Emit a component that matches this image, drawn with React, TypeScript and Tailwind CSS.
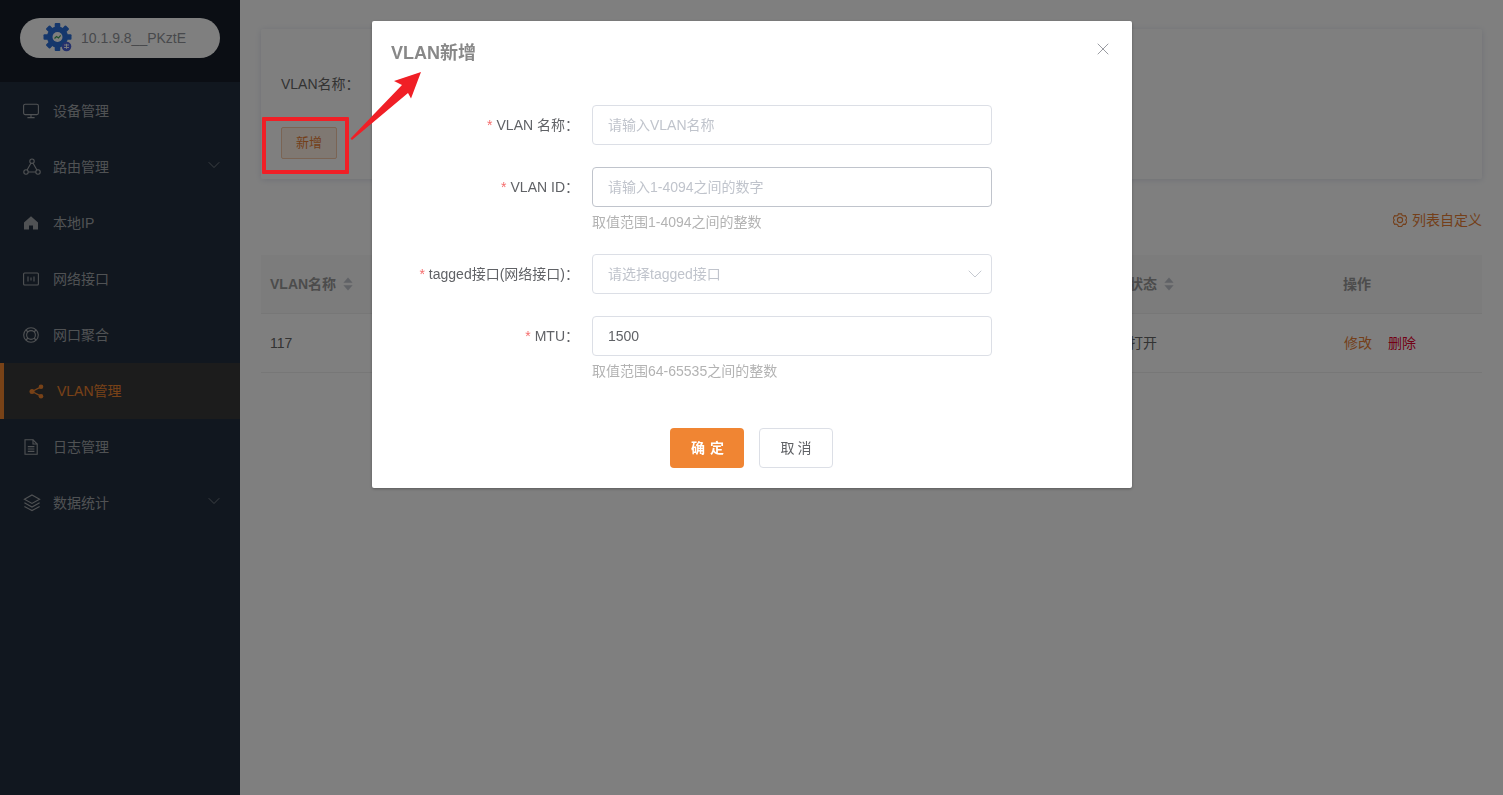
import { ChevronDown, X } from "lucide-react";

function Logo() {
  const teeth = [0, 45, 90, 135, 180, 225, 270, 315];
  return (
    <svg width="30" height="30" viewBox="0 0 30 30" className="shrink-0">
      <g transform="translate(14.5 14)" fill="#2a6fd8">
        <circle r="10.5" />
        {teeth.map((a) => (
          <rect key={a} x="-2.8" y="-14" width="5.6" height="6" rx="1" transform={`rotate(${a})`} />
        ))}
        <circle r="5" fill="#fff" />
        <path d="M-3 1.5 L-1 -0.5 L1 1 L3.2 -1.6" stroke="#3fa15a" strokeWidth="1.2" fill="none" />
      </g>
      <circle cx="23.5" cy="23.5" r="4.8" fill="#4a63d8" />
      <path d="M21 22h5M21 24.5h5M23.5 20.8v5" stroke="#fff" strokeWidth="0.9" />
    </svg>
  );
}

function DeviceIcon() {
  return (
    <svg width="16" height="16" viewBox="0 0 16 16" fill="none" stroke="currentColor" strokeWidth="1.1">
      <rect x="0.6" y="1.2" width="14.8" height="10.4" rx="1.6" />
      <path d="M8 11.6v2.8M4.4 14.6h7.2" />
    </svg>
  );
}

function RouteIcon() {
  return (
    <svg width="18" height="18" viewBox="0 0 18 18" fill="none" stroke="currentColor" strokeWidth="1.1">
      <circle cx="9" cy="3.2" r="2.2" />
      <circle cx="3" cy="14" r="2.2" />
      <circle cx="15" cy="14" r="2.2" />
      <path d="M7.9 5.2 4.1 12M10.1 5.2 13.9 12M5.2 14h7.6" />
    </svg>
  );
}

function HomeIcon() {
  return (
    <svg width="16" height="16" viewBox="0 0 16 16" fill="currentColor">
      <path d="M8 1.2 15 7.4V14.6H10V10.4H6V14.6H1V7.4Z" />
    </svg>
  );
}

function PortIcon() {
  return (
    <svg width="16" height="16" viewBox="0 0 16 16" fill="none" stroke="currentColor" strokeWidth="1.1">
      <rect x="0.6" y="2" width="14.8" height="12" rx="1" />
      <path d="M5 5.4v5.2M8 6.6v3M11 5.4v5.2" />
    </svg>
  );
}

function BondIcon() {
  return (
    <svg width="16" height="16" viewBox="0 0 16 16" fill="none" stroke="currentColor" strokeWidth="1.1">
      <circle cx="8" cy="8" r="7.3" />
      <circle cx="8" cy="8" r="4.4" />
      <path d="M3 3 5 5M13 3 11 5M3 13l2-2M13 13l-2-2" />
    </svg>
  );
}

function ShareIcon() {
  return (
    <svg width="15" height="15" viewBox="0 0 15 15" fill="currentColor">
      <circle cx="3" cy="7.5" r="2.5" />
      <circle cx="12" cy="2.8" r="2.3" />
      <circle cx="12" cy="12.2" r="2.3" />
      <path d="M3 7.5 12 2.8M3 7.5l9 4.7" stroke="currentColor" strokeWidth="1.4" />
    </svg>
  );
}

function LogIcon() {
  return (
    <svg width="16" height="16" viewBox="0 0 16 16" fill="none" stroke="currentColor" strokeWidth="1.1">
      <path d="M2 0.8H10L14.2 5V15.2H2Z" />
      <path d="M10 0.8V5H14.2M4.8 7.6h6.6M4.8 10h6.6M4.8 12.4h6.6" />
    </svg>
  );
}

function StackIcon() {
  return (
    <svg width="18" height="18" viewBox="0 0 18 18" fill="none" stroke="currentColor" strokeWidth="1.1">
      <path d="M9 1 16.6 5.2 9 9.4 1.4 5.2Z" />
      <path d="M1.4 8.8 9 13l7.6-4.2M1.4 12.4 9 16.6l7.6-4.2" />
    </svg>
  );
}

function SortArrows() {
  return (
    <svg width="10" height="14" viewBox="0 0 10 14" fill="#c0c4cc" className="ml-[7px]">
      <path d="M5 0.5 9.6 5.8H0.4Z" />
      <path d="M5 13.5 9.6 8.2H0.4Z" />
    </svg>
  );
}

function GearOutline() {
  return (
    <svg width="14" height="14" viewBox="0 0 14 14" fill="none" stroke="currentColor" strokeWidth="1.1">
      <path d="M5.4 0.9h3.2l.6 1.7 1.8.3 1.4-.2 1.4 2.6-1.1 1.7 1.1 1.7-1.4 2.6-1.9-.2-1.3 1.4-.6 1.1H5.4l-.6-1.7-1.8-.8-1.4.2L.2 8.7l1.1-1.7L.2 5.3l1.4-2.6 1.4.2 1.8-.3Z" />
      <circle cx="7" cy="7" r="2.6" />
    </svg>
  );
}

const menu = [
  { label: "设备管理", icon: <DeviceIcon /> },
  { label: "路由管理", icon: <RouteIcon />, arrow: true },
  { label: "本地IP", icon: <HomeIcon /> },
  { label: "网络接口", icon: <PortIcon /> },
  { label: "网口聚合", icon: <BondIcon /> },
  { label: "VLAN管理", icon: <ShareIcon />, active: true },
  { label: "日志管理", icon: <LogIcon /> },
  { label: "数据统计", icon: <StackIcon />, arrow: true },
];

function Sidebar() {
  return (
    <aside className="w-[240px] shrink-0 bg-[#232f3f]">
      <div className="h-[82px] bg-[#161c28] pt-[18px] px-[20px]">
        <div className="h-[40px] rounded-[20px] bg-white flex items-center pl-[23px] text-[14px] text-[#909399]">
          <Logo />
          <span className="ml-[8px]">10.1.9.8__PKztE</span>
        </div>
      </div>
      <nav className="pt-px">
        {menu.map((item) =>
          item.active ? (
            <div
              key={item.label}
              className="h-[56px] flex items-center border-l-4 border-[#f0842f] bg-[#383838] pl-[25px] text-[14px] text-[#f0842f]"
            >
              <span className="w-[28px] flex">{item.icon}</span>
              {item.label}
            </div>
          ) : (
            <div key={item.label} className="h-[56px] flex items-center pl-[23px] pr-[16px] text-[14px] text-[#a0a4a8]">
              <span className="w-[30px] flex shrink-0">{item.icon}</span>
              <span className="flex-1">{item.label}</span>
              {item.arrow && <ChevronDown size={20} strokeWidth={0.8} className="-mt-[5px]" />}
            </div>
          ),
        )}
      </nav>
    </aside>
  );
}

function Content() {
  return (
    <main className="flex-1 bg-white px-[21px] pt-[29px] text-[14px] text-[#666]">
      <section className="h-[150px] rounded-[2px] bg-white shadow-[0_1px_6px_rgba(80,100,150,0.2)] px-[20px] pt-[45px]">
        <div className="h-[20px] leading-[20px]">VLAN名称：</div>
        <button className="mt-[33px] w-[56px] h-[32px] rounded-[2px] border border-[#f5c9a8] bg-[#fff0e4] text-[13px] text-[#e87f35]">
          新增
        </button>
      </section>

      <div className="mt-[31px] h-[20px] flex items-center justify-end gap-[5px] text-[#e87f35]">
        <GearOutline />
        <span>列表自定义</span>
      </div>

      <div className="mt-[25px]">
        <div className="h-[59px] grid grid-cols-[859px_214px_1fr] items-center bg-[#f8f8f8] border-b border-[#eeeeee] font-bold text-[#999]">
          <div className="pl-[9px] flex items-center">
            VLAN名称
            <SortArrows />
          </div>
          <div className="pl-[9px] flex items-center">
            状态
            <SortArrows />
          </div>
          <div className="pl-[9px]">操作</div>
        </div>
        <div className="h-[59px] grid grid-cols-[859px_214px_1fr] items-center border-b border-[#eeeeee]">
          <div className="pl-[9px]">117</div>
          <div className="pl-[9px]">打开</div>
          <div className="pl-[10px] flex gap-[16px]">
            <span className="text-[#e87f35]">修改</span>
            <span className="text-[#e6002d]">删除</span>
          </div>
        </div>
      </div>
    </main>
  );
}

function Field(props: { label: string; hint?: string; children: React.ReactNode }) {
  return (
    <div className="flex mb-[22px] last:mb-0">
      <label className="w-[207px] h-[40px] flex items-center justify-end text-[14px] text-[#606266] whitespace-nowrap">
        <span className="text-[#f56c6c] mr-[4px]">*</span>
        {props.label}：
      </label>
      <div className="ml-[13px] w-[400px]">
        {props.children}
        {props.hint && <div className="h-[25px] pt-[6px] leading-[18px] text-[14px] text-[#b3b3b3]">{props.hint}</div>}
      </div>
    </div>
  );
}

const inputCls =
  "block w-full h-[40px] rounded-[4px] border px-[15px] text-[14px] text-[#606266] outline-none placeholder:text-[#c0c4cc]";

function Modal() {
  return (
    <div className="fixed inset-0 bg-black/50 pt-[21px] pl-[372px]">
      <div className="relative w-[760px] h-[467px] rounded-[2px] bg-white shadow-[0_1px_3px_rgba(0,0,0,0.3)]">
        <div className="pl-[19px] pt-[20px] text-[18px] leading-[24px] font-bold text-[#888888]">VLAN新增</div>
        <X size={20} strokeWidth={1.1} className="absolute right-[19px] top-[18px] text-[#909399]" />
        <div className="mt-[40px]">
          <Field label="VLAN 名称">
            <input readOnly placeholder="请输入VLAN名称" className={`${inputCls} border-[#dcdfe6]`} />
          </Field>
          <Field label="VLAN ID" hint="取值范围1-4094之间的整数">
            <input readOnly placeholder="请输入1-4094之间的数字" className={`${inputCls} border-[#c0c4cc]`} />
          </Field>
          <Field label="tagged接口(网络接口)">
            <div className="h-[40px] rounded-[4px] border border-[#dcdfe6] px-[15px] flex items-center justify-between text-[14px] text-[#c0c4cc]">
              请选择tagged接口
              <ChevronDown size={24} strokeWidth={0.9} className="-mr-[11px]" />
            </div>
          </Field>
          <Field label="MTU" hint="取值范围64-65535之间的整数">
            <input readOnly value="1500" className={`${inputCls} border-[#dcdfe6]`} />
          </Field>
        </div>
        <div className="mt-[47px] flex pl-[298px] gap-[15px]">
          <button className="w-[74px] h-[40px] pl-[6px] rounded-[4px] bg-[#f08533] text-[14px] font-bold text-white tracking-[5px]">确定</button>
          <button className="w-[74px] h-[40px] pl-[3px] rounded-[4px] border border-[#dcdfe6] bg-white text-[14px] text-[#606266] tracking-[3px]">
            取消
          </button>
        </div>
      </div>
    </div>
  );
}

// red markup drawn on top of the screenshot
function Annotation() {
  return (
    <>
      <div className="fixed left-[262px] top-[117px] w-[87px] h-[57px] rounded-[1px] border-4 border-[#f01f26]" />
      <svg className="fixed left-[345px] top-[65px]" width="85" height="80" viewBox="345 65 85 80">
        <path d="M350.5 138.5 402 85 394 81 421 72 411 98.5 408 93 352 140Z" fill="#f01f26" />
      </svg>
    </>
  );
}

export default function App() {
  return (
    <div className="h-[795px] flex overflow-hidden font-['Liberation_Sans','Noto_Sans_CJK_SC',sans-serif]">
      <Sidebar />
      <Content />
      <Modal />
      <Annotation />
    </div>
  );
}
